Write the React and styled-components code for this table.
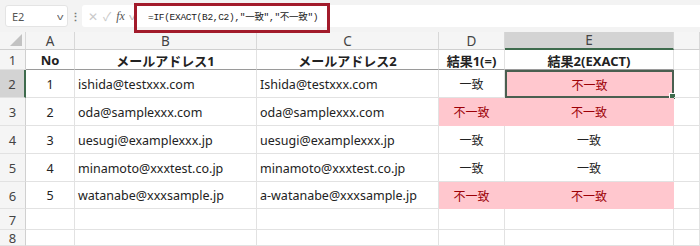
import styled, { createGlobalStyle, css } from "styled-components";

const Global = createGlobalStyle`
  html, body {
    margin: 0;
    padding: 0;
    background: #ffffff;
    overflow: hidden;
  }
  body {
    font-family: "Noto Sans", "Noto Sans CJK JP", sans-serif;
  }
`;

const Page = styled.div`
  width: 700px;
  height: 246px;
  overflow: hidden;
  display: flex;
  flex-direction: column;
`;

const Toolbar = styled.div`
  height: 32px;
  flex: none;
  display: flex;
  align-items: center;
  padding-left: 5px;
  background: #f3f3f3;
  box-sizing: border-box;
  position: relative;
  z-index: 2;
`;

const NameBox = styled.div`
  width: 63px;
  height: 22px;
  box-sizing: border-box;
  display: flex;
  align-items: center;
  justify-content: space-between;
  padding: 0 4px 0 6px;
  background: #ffffff;
  border: 1px solid #e4e4e4;
  border-radius: 3px;
  font-size: 11px;
  color: #555;
`;

const Chevron = styled.span`
  font-size: 9px;
  color: ${(p) => p.$color || "#666"};
  transform: scaleX(1.4);
`;

const Dots = styled.div`
  width: 14px;
  text-align: center;
  font-size: 11px;
  color: #777;
  font-weight: bold;
`;

const FxBox = styled.div`
  width: 52px;
  height: 22px;
  box-sizing: border-box;
  display: flex;
  align-items: center;
  gap: 5px;
  padding-left: 6px;
  background: #ffffff;
  border-radius: 3px 0 0 3px;
  color: #cacaca;
  font-size: 12px;
`;

const Fx = styled.span`
  font-family: "Liberation Serif", serif;
  font-style: italic;
  color: #555;
  font-size: 12px;
`;

const FormulaField = styled.div`
  flex: 1;
  height: 22px;
  position: relative;
  margin-left: 2px;
  background: #ffffff;
  display: flex;
  align-items: center;
  padding-left: 12px;
  font-family: "Liberation Mono", "Noto Sans CJK JP", monospace;
  font-size: 9.5px;
  color: #222;
  letter-spacing: -0.3px;
`;

const Annotation = styled.div`
  position: absolute;
  left: -2px;
  top: -2px;
  width: 196px;
  height: 30px;
  box-sizing: border-box;
  border: 3px solid #a21b2b;
  pointer-events: none;
`;

const Sheet = styled.div`
  display: grid;
  grid-template-columns: 26px 49px 182px 182px 66px 169px 1fr;
  grid-template-rows: 18px 20px 28px 28px 28px 28px 27px 21px 16px;
  background: #ffffff;
`;

const cellLines = css`
  box-sizing: border-box;
  border-right: 1px solid #e2e2e2;
  border-bottom: 1px solid #e2e2e2;
`;

const ColHead = styled.div`
  ${cellLines};
  border-right-color: #d8d8d8;
  border-bottom-color: #cfcfcf;
  background: ${(p) => (p.$active ? "#d3d3d3" : "#f5f5f5")};
  ${(p) => p.$active && "border-bottom: 2px solid #3e6b4d;"}
  display: flex;
  align-items: center;
  justify-content: center;
  font-size: 13.5px;
  color: #444;
`;

const Corner = styled.div`
  ${cellLines};
  border-right-color: #d8d8d8;
  border-bottom-color: #cfcfcf;
  background: #f5f5f5;
  position: relative;
  &::after {
    content: "";
    position: absolute;
    right: 3px;
    bottom: 3px;
    border-left: 12px solid transparent;
    border-bottom: 12px solid #c2c2c2;
  }
`;

const RowHead = styled.div`
  ${cellLines};
  border-right-color: #d0d0d0;
  background: ${(p) => (p.$active ? "#d3d3d3" : "#f5f5f5")};
  ${(p) => p.$active && "border-right: 2px solid #3e6b4d;"}
  display: flex;
  align-items: center;
  justify-content: center;
  padding-top: 2px;
  font-size: 13px;
  line-height: 1;
  color: #444;
`;

const Cell = styled.div`
  ${cellLines};
  ${(p) => p.$strong && "border-bottom-color: #9a9a9a;"}
  display: flex;
  align-items: center;
  justify-content: ${(p) => (p.$center ? "center" : "flex-start")};
  padding: 1px 3px 0;
  font-size: ${(p) => (p.$strong ? "13px" : "12.5px")};
  font-weight: ${(p) => (p.$strong ? 700 : 400)};
  color: #222;
  white-space: nowrap;
  overflow: hidden;
  position: relative;
  ${(p) =>
    p.$bad &&
    css`
      background: #ffc7ce;
      color: #9c0006;
      border-color: transparent;
      font-size: 12px;
    `}
  ${(p) => p.$good && "font-size: 12px;"}
  ${(p) =>
    p.$selected &&
    css`
      overflow: visible;
      border: 2px solid #4a5f50;
      &::after {
        content: "";
        position: absolute;
        right: -4px;
        bottom: -4px;
        width: 5px;
        height: 5px;
        background: #3e6b4d;
        border: 1px solid #ffffff;
      }
    `}
`;

const rows = [
  [1, "ishida@testxxx.com", "Ishida@testxxx.com", "一致", "不一致"],
  [2, "oda@samplexxx.com", "oda@samplexxx.com", "不一致", "不一致"],
  [3, "uesugi@examplexxx.jp", "uesugi@examplexxx.jp", "一致", "一致"],
  [4, "minamoto@xxxtest.co.jp", "minamoto@xxxtest.co.jp", "一致", "一致"],
  [5, "watanabe@xxxsample.jp", "a-watanabe@xxxsample.jp", "不一致", "不一致"],
];

const Result = ({ value, selected }) => (
  <Cell
    $center
    $bad={value === "不一致"}
    $good={value === "一致"}
    $selected={selected}
  >
    {value}
  </Cell>
);

const App = () => {
  return (
    <>
      <Global />
      <Page>
        <Toolbar>
          <NameBox>
            E2
            <Chevron>v</Chevron>
          </NameBox>
          <Dots>⋮</Dots>
          <FxBox>
            <span>✕</span>
            <span>✓</span>
            <Fx>fx</Fx>
            <Chevron $color="#bbb">v</Chevron>
          </FxBox>
          <FormulaField>
            =IF(EXACT(B2,C2),"一致","不一致")
            <Annotation />
          </FormulaField>
        </Toolbar>
        <Sheet>
          <Corner />
          {["A", "B", "C", "D", "E", ""].map((c, i) => (
            <ColHead key={i} $active={c === "E"}>
              {c}
            </ColHead>
          ))}

          <RowHead>1</RowHead>
          <Cell $center $strong>No</Cell>
          <Cell $center $strong>メールアドレス1</Cell>
          <Cell $center $strong>メールアドレス2</Cell>
          <Cell $center $strong>結果1(=)</Cell>
          <Cell $center $strong>結果2(EXACT)</Cell>
          <Cell />

          {rows.map((r, i) => (
            <>
              <RowHead key={"h" + i} $active={i === 0}>
                {i + 2}
              </RowHead>
              <Cell key={"a" + i} $center>{r[0]}</Cell>
              <Cell key={"b" + i}>{r[1]}</Cell>
              <Cell key={"c" + i}>{r[2]}</Cell>
              <Result key={"d" + i} value={r[3]} />
              <Result key={"e" + i} value={r[4]} selected={i === 0} />
              <Cell key={"f" + i} />
            </>
          ))}

          {[7, 8].map((n) => (
            <>
              <RowHead key={"h" + n}>{n}</RowHead>
              <Cell key={"a" + n} />
              <Cell key={"b" + n} />
              <Cell key={"c" + n} />
              <Cell key={"d" + n} />
              <Cell key={"e" + n} />
              <Cell key={"f" + n} />
            </>
          ))}
        </Sheet>
      </Page>
    </>
  );
};

export default App;
